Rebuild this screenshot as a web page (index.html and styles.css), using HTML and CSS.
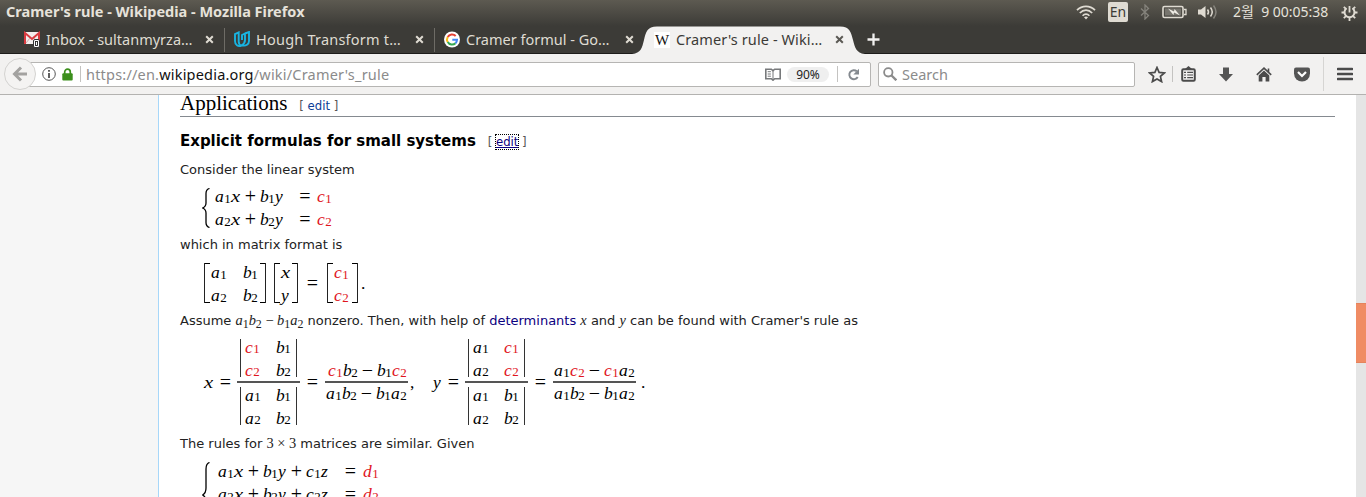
FILE: index.html
```html
<!DOCTYPE html>
<html lang="en">
<head>
<meta charset="utf-8">
<title>Cramer's rule - Wikipedia</title>
<link rel="stylesheet" href="styles.css">
</head>
<body>
<header class="titlebar">
  <span class="window-title">Cramer's rule - Wikipedia - Mozilla Firefox</span>
  <div class="tray">
    <svg class="wifi" width="20" height="16" viewBox="0 0 20 16" fill="none" stroke="#dfdbd2" stroke-width="1.7"><path d="M1 6.2C6 1 14 1 19 6.2M3.8 9C7.5 5.200 12.500 5.200 16.200 9M6.600 11.800c2-2.200 4.800-2.200 6.800 0"/><path d="M10 15.500l-2-2.200q2-1.500 4 0z" fill="#dfdbd2" stroke="none"/></svg>
    <span class="lang">En</span>
    <svg class="bt" width="10" height="16" viewBox="0 0 10 16" fill="none" stroke="#85837c" stroke-width="1.3"><path d="M1 4.500l7.500 7L5 15V1l3.500 3.500L1 11.500"/></svg>
    <svg class="bat" width="25" height="14" viewBox="0 0 25 14"><rect x="1" y="1.500" width="20" height="11" rx="1.500" fill="none" stroke="#dfdbd2" stroke-width="1.600"/><path d="M22 4.500h2v5h-2" fill="none" stroke="#dfdbd2" stroke-width="1.300"/><rect x="3" y="3.500" width="16" height="7" fill="#77756e"/><path d="M6 3.500l6 3 .5-2.500 5.500 6.500-6-3-.5 2.500z" fill="#efece5"/></svg>
    <svg class="vol" width="20" height="16" viewBox="0 0 20 16" fill="none" stroke="#dfdbd2" stroke-width="1.500"><path d="M0 5.500h3L7.500 2v12L3 10.500H0z" fill="#dfdbd2" stroke="none"/><path d="M9.500 5.500q2 2.500 0 5M12.500 3.500q3.500 4.500 0 9"/><path d="M15.500 1.500q5 6.500 0 13" stroke="#85837c"/></svg>
    <span class="clock">2월&nbsp; 9 00:05:38</span>
    <svg class="gear" width="17" height="17" viewBox="0 0 17 17" fill="none" stroke="#dfdbd2"><path d="M5.500 4.200a5 5 0 1 0 6 0" stroke-width="2"/><path d="M8.500 2v6.500M8.500 13.500V17M0.500 8.500H4M13 8.500h3.500M2.800 2.800l2.400 2.400M14.200 2.800l-2.400 2.400M2.800 14.200l2.400-2.400M14.200 14.200l-2.400-2.400" stroke-width="1.800"/></svg>
  </div>
</header>

<nav class="tabs">
  <div class="tab">
    <svg width="17" height="17" viewBox="0 0 17 17"><rect y="1" width="16" height="12" rx="1" fill="#f3eeee"/><path d="M1 13V2l7 6 7-6v11" fill="none" stroke="#d93b40" stroke-width="2"/><path d="M2 12l4-5M14 12l-4-5" stroke="#cfa9a9"/><rect x="9.500" y="8.500" width="6" height="8" rx="1.500" fill="#fff" stroke="#333"/><rect x="11.500" y="10.500" width="2" height="4" fill="#fff" stroke="#222" stroke-width=".9"/></svg>
    <span class="label t1">Inbox - sultanmyrza…</span>
    <svg class="close" width="9" height="9" viewBox="0 0 9 9"><path d="M1.200 1.200l6.600 6.600M7.800 1.200L1.200 7.800"/></svg>
  </div>
  <div class="tab">
    <svg width="17" height="17" viewBox="0 0 17 17" fill="none" stroke="#19b3e0" stroke-width="1.900"><path d="M4.700 1.400L1 3.200V10c0 4 3 6 6.500 4.600C5.500 14 4.700 12.500 4.700 10.500zM8 9V4l3-1.500V9c0 3-1.500 4.300-3.500 5.300M11 2.500L15 1v9c0 3-3 5.500-7 4.300"/></svg>
    <span class="label t2">Hough Transform t…</span>
    <svg class="close" width="9" height="9" viewBox="0 0 9 9"><path d="M1.200 1.200l6.600 6.600M7.800 1.200L1.200 7.800"/></svg>
  </div>
  <div class="tab">
    <svg width="17" height="17" viewBox="0 0 17 17" fill="none" stroke-width="2"><circle cx="8" cy="8.500" r="8" fill="#fff"/><path d="M11.700 5A5 5 0 0 0 3.700 6" stroke="#e44134"/><path d="M3.700 6a5 5 0 0 0 0 5" stroke="#f8bb15"/><path d="M3.700 11a5 5 0 0 0 7.800 1.200" stroke="#34a853"/><path d="M11.500 12.200A5 5 0 0 0 13 8.700H8.300" stroke="#4285f4"/></svg>
    <span class="label t3">Cramer formul - Go…</span>
    <svg class="close" width="9" height="9" viewBox="0 0 9 9"><path d="M1.200 1.200l6.600 6.600M7.800 1.200L1.200 7.800"/></svg>
  </div>
  <div class="tab active">
    <svg class="tab-shape" width="236" height="28" viewBox="0 0 236 28"><path d="M0 28C9 27 10 22 12 14S15 .5 25 .5H208c10 0 11 6 13 13.500S224 27 233 28z" fill="#f2f1f0"/></svg>
    <span class="wfav">W</span>
    <span class="label t4">Cramer's rule - Wiki…</span>
    <svg class="close" width="9" height="9" viewBox="0 0 9 9"><path d="M1.200 1.200l6.600 6.600M7.800 1.200L1.200 7.800"/></svg>
  </div>
  <svg class="plus" width="13" height="13" viewBox="0 0 13 13"><path d="M6.500 .5v12M.5 6.500h12" stroke="#f2f1f0" stroke-width="2.300"/></svg>
</nav>

<div class="toolbar">
  <svg class="back" width="32" height="32" viewBox="0 0 32 32"><circle cx="16" cy="16" r="15.500" fill="#f4f3f2" stroke="#d3d2d0"/><path d="M23 16H11M17 9.500L10.500 16l6.500 6.500" fill="none" stroke="#a3a2a0" stroke-width="3"/></svg>
  <div class="urlbar">
    <svg class="info" width="14" height="14" viewBox="0 0 14 14"><circle cx="7" cy="7" r="6.300" fill="none" stroke="#555"/><path d="M7 3v1.800M7 6v5" stroke="#444" stroke-width="1.700"/></svg>
    <svg class="lock" width="11" height="13" viewBox="0 0 11 13"><path d="M2.700 7V4a2.800 2.800 0 0 1 5.600 0v3" fill="none" stroke="#3c8f1c" stroke-width="1.700"/><rect x=".3" y="5.300" width="10.400" height="7.200" rx="1" fill="#3c8f1c"/></svg>
    <span class="vsep"></span>
    <span class="url">https://en.<b>wikipedia.org</b>/wiki/Cramer's_rule</span>
    <svg class="reader" width="16" height="13" viewBox="0 0 16 13" fill="none" stroke="#77797b"><path d="M.8 1.200h5.500L8 2.700l1.700-1.500h5.500v9.500H9.700L8 12.200l-1.700-1.500H.8z" stroke-width="1.600"/><path d="M8 3v8.500M2.700 3.700h3.200M2.700 6h3.200M2.700 8.200h3.200"/></svg>
    <span class="zoom">90%</span>
    <span class="vsep"></span>
    <svg class="reload" width="13" height="13" viewBox="0 0 13 13"><path d="M9.800 3.300A4.500 4.500 0 1 0 10.700 9" fill="none" stroke="#84898f" stroke-width="1.900"/><path d="M12 .8v5.700H6.300z" fill="#84898f"/></svg>
  </div>
  <div class="search">
    <svg width="14" height="14" viewBox="0 0 14 14" fill="none" stroke="#8b8b8b"><circle cx="5.300" cy="5.300" r="4.200" stroke-width="1.800"/><path d="M8.300 8.300l5 5" stroke-width="2.300"/></svg>
    <span>Search</span>
  </div>
  <div class="actions">
    <svg class="star" width="18" height="17" viewBox="0 0 18 17"><path d="M9 1.500l2.100 4.900 5.300.5-4 3.500 1.200 5.200L9 12.900l-4.600 2.700 1.200-5.200-4-3.500 5.300-.5z" fill="none" stroke="#4b4b4b" stroke-width="1.700"/></svg>
    <span class="vsep"></span>
    <svg class="clip" width="15" height="16" viewBox="0 0 15 16" fill="none" stroke="#4b4b4b"><rect x="1.200" y="3.200" width="12.600" height="11.600" rx="1.200" stroke-width="2"/><path d="M4 3l3.500-3L11 3z" fill="#4b4b4b" stroke="none"/><path d="M3 6.300h2M3 9h2M3 11.700h2M6.200 6.300H12M6.200 9H12M6.200 11.700H12" stroke-width="1.200"/></svg>
    <svg class="down" width="14" height="15" viewBox="0 0 14 15"><path d="M4 .5h6V7h4l-7 7.500L0 7h4z" fill="#555"/></svg>
    <svg class="home" width="16" height="15" viewBox="0 0 16 15"><path d="M.8 7.800L8 1.200l7.200 6.600M12.500 1.500V5" fill="none" stroke="#4b4b4b" stroke-width="1.600"/><path d="M8 3.600l5.300 4.800v6.100H9.600V10H6.400v4.500H2.700V8.400z" fill="#4b4b4b"/></svg>
    <svg class="pocket" width="16" height="15" viewBox="0 0 16 15"><path d="M2 .5h12q2 0 2 2V6.500a8 8 0 0 1-16 0V2.500q0-2 2-2z" fill="#555"/><path d="M4 5l4 4 4-4" fill="none" stroke="#fff" stroke-width="2.200"/></svg>
    <span class="vsep tall"></span>
    <svg class="menu" width="16" height="14" viewBox="0 0 16 14"><path d="M1 2h14M1 7h14M1 12h14" stroke="#4b4b4b" stroke-width="2.600" stroke-linecap="round"/></svg>
  </div>
</div>

<div class="viewport">
  <aside class="side"></aside>
  <main class="article">
    <h2><span class="h2text">Applications</span><small>[ <a>edit</a> ]</small></h2>
    <h3><span class="h3text">Explicit formulas for small systems</span><small>[ <a class="focus">edit</a> ]</small></h3>
    <p class="p1">Consider the linear system</p>

    <div class="system">
      <svg class="brace" width="8" height="40" viewBox="0 0 8 40"><path d="M7.500 .5Q4 1.500 4 5.500V15Q4 18.500.7 20Q4 21.500 4 25V34.500Q4 38.500 7.500 39.500"/></svg>
      <div class="rows">
        <div class="math"><i class="a">a</i><sub>1</sub><i class="x">x</i><s>+</s><i class="b">b</i><sub>1</sub><i class="y">y</i><s class="eq">=</s><em><i class="c">c</i><sub>1</sub></em></div>
        <div class="math"><i class="a">a</i><sub>2</sub><i class="x">x</i><s>+</s><i class="b">b</i><sub>2</sub><i class="y">y</i><s class="eq">=</s><em><i class="c">c</i><sub>2</sub></em></div>
      </div>
    </div>

    <p class="p2">which in matrix format is</p>

    <div class="matrix-eq">
      <div class="matrix two"><div class="math"><i class="a">a</i><sub>1</sub></div><div class="math"><i class="b">b</i><sub>1</sub></div><div class="math"><i class="a">a</i><sub>2</sub></div><div class="math"><i class="b">b</i><sub>2</sub></div></div>
      <div class="matrix vec"><div class="math"><i class="x">x</i></div><div class="math"><i class="y">y</i></div></div>
      <div class="math"><s class="meq">=</s></div>
      <div class="matrix rhs"><div class="math"><em><i class="c">c</i><sub>1</sub></em></div><div class="math"><em><i class="c">c</i><sub>2</sub></em></div></div>
      <div class="math dot">.</div>
    </div>

    <p class="p3">Assume <span class="tm"><i>a</i><sub>1</sub><i>b</i><sub>2</sub> − <i>b</i><sub>1</sub><i>a</i><sub>2</sub></span> nonzero. Then, with help of <a>determinants</a> <span class="tm"><i>x</i></span> and <span class="tm"><i>y</i></span> can be found with Cramer's rule as</p>

    <div class="cramer">
      <div class="math"><i class="x">x</i><s class="deq">=</s></div>
      <div class="frac">
        <div class="det top"><div class="math"><em><i class="c">c</i><sub>1</sub></em></div><div class="math"><i class="b">b</i><sub>1</sub></div><div class="math"><em><i class="c">c</i><sub>2</sub></em></div><div class="math"><i class="b">b</i><sub>2</sub></div></div>
        <div class="det"><div class="math"><i class="a">a</i><sub>1</sub></div><div class="math"><i class="b">b</i><sub>1</sub></div><div class="math"><i class="a">a</i><sub>2</sub></div><div class="math"><i class="b">b</i><sub>2</sub></div></div>
      </div>
      <div class="math"><s class="feq">=</s></div>
      <div class="frac small">
        <div class="math num"><em><i class="c">c</i><sub>1</sub></em><i class="b">b</i><sub>2</sub><s>−</s><i class="b">b</i><sub>1</sub><em><i class="c">c</i><sub>2</sub></em></div>
        <div class="math"><i class="a">a</i><sub>1</sub><i class="b">b</i><sub>2</sub><s>−</s><i class="b">b</i><sub>1</sub><i class="a">a</i><sub>2</sub></div>
      </div>
      <div class="math comma">,</div>
      <div class="math"><i class="y">y</i><s class="deq">=</s></div>
      <div class="frac">
        <div class="det top"><div class="math"><i class="a">a</i><sub>1</sub></div><div class="math"><em><i class="c">c</i><sub>1</sub></em></div><div class="math"><i class="a">a</i><sub>2</sub></div><div class="math"><em><i class="c">c</i><sub>2</sub></em></div></div>
        <div class="det"><div class="math"><i class="a">a</i><sub>1</sub></div><div class="math"><i class="b">b</i><sub>1</sub></div><div class="math"><i class="a">a</i><sub>2</sub></div><div class="math"><i class="b">b</i><sub>2</sub></div></div>
      </div>
      <div class="math"><s class="feq">=</s></div>
      <div class="frac small">
        <div class="math"><i class="a">a</i><sub>1</sub><em><i class="c">c</i><sub>2</sub></em><s>−</s><em><i class="c">c</i><sub>1</sub></em><i class="a">a</i><sub>2</sub></div>
        <div class="math"><i class="a">a</i><sub>1</sub><i class="b">b</i><sub>2</sub><s>−</s><i class="b">b</i><sub>1</sub><i class="a">a</i><sub>2</sub></div>
      </div>
      <div class="math dot">.</div>
    </div>

    <p class="p4">The rules for <span class="tm">3 × 3</span> matrices are similar. Given</p>

    <div class="system three">
      <svg class="brace" width="8" height="66" viewBox="0 0 8 66"><path d="M7.500 .5Q4 1.500 4 7V26Q4 31 .7 33Q4 35 4 40V60Q4 64.500 7.500 65.500"/></svg>
      <div class="rows">
        <div class="math"><i class="a">a</i><sub>1</sub><i class="x">x</i><s>+</s><i class="b">b</i><sub>1</sub><i class="y">y</i><s>+</s><i class="c">c</i><sub>1</sub><i class="z">z</i><s class="eq">=</s><em><i class="d">d</i><sub>1</sub></em></div>
        <div class="math"><i class="a">a</i><sub>2</sub><i class="x">x</i><s>+</s><i class="b">b</i><sub>2</sub><i class="y">y</i><s>+</s><i class="c">c</i><sub>2</sub><i class="z">z</i><s class="eq">=</s><em><i class="d">d</i><sub>2</sub></em></div>
      </div>
    </div>
  </main>
  <div class="scroll"><div class="thumb"></div></div>
</div>
</body>
</html>
```

FILE: styles.css
```css
* { box-sizing: border-box; }
body {
  margin: 0;
  width: 1366px;
  height: 497px;
  overflow: hidden;
  display: flex;
  flex-direction: column;
  background: #fff;
  font-family: "Noto Sans", "Open Sans", "Noto Sans CJK KR", sans-serif;
}
svg { display: block; flex: none; }

/* Title bar and system tray */
.titlebar {
  height: 26px;
  flex: none;
  display: flex;
  justify-content: space-between;
  align-items: center;
  padding: 0 8px 2px 6px;
  background: linear-gradient(#5d5a51, #3c3b37);
  color: #e6e2da;
}
.window-title { font-size: 14.5px; font-weight: 700; line-height: 22px; padding-bottom: 2px; white-space: nowrap; }
.tray { display: flex; align-items: center; }
.lang {
  width: 20px; height: 20px; margin: 0 12px;
  border-radius: 2px; background: #dfdbd2; color: #3c3b37;
  font-size: 14px; line-height: 20px; text-align: center;
}
.bat { margin-left: 12px; }
.vol { margin-left: 11px; }
.clock { width: 96px; margin: 0 12px 0 15px; font-size: 14px; line-height: 22px; white-space: nowrap; }

/* Tabs */
.tabs {
  height: 28px;
  flex: none;
  display: flex;
  align-items: center;
  padding-left: 15px;
  background: #3c3b37;
  border-bottom: 1px solid #1d1c1a;
}
.tab {
  position: relative;
  width: 210px; height: 24px;
  display: flex; align-items: center;
  padding: 0 10px 0 9px;
  border-right: 1px solid #6e6c66;
  color: #dfdbd2;
}
.tab:nth-child(3), .tab.active { border-right-color: transparent; }
.label { width: 150px; margin-left: 5px; font-size: 14.5px; line-height: 22px; padding-bottom: 2px; white-space: nowrap; }
.t2 { letter-spacing: .22px; }
.t4 { letter-spacing: .1px; }
.close { margin-left: auto; fill: none; stroke: #dfdbd2; stroke-width: 2; }
.active { color: #3c3b37; }
.active .close { stroke: #5b5954; }
.tab-shape { position: absolute; left: -13px; top: -2px; }
.active > :not(.tab-shape) { position: relative; }
.wfav { width: 16px; height: 16px; background: #fff; color: #111; font: 15px/16px "Liberation Serif", serif; text-align: center; }
.active .label { margin-left: 6px; width: 149px; }
.plus { margin-left: 12px; }

/* Navigation toolbar */
.toolbar {
  height: 41px;
  flex: none;
  display: flex;
  align-items: center;
  padding: 0 11px 0 4px;
  background: #f2f1f0;
  border-bottom: 1px solid #b3b2b0;
}
.back { position: relative; z-index: 1; }
.urlbar, .search {
  height: 25px;
  display: flex; align-items: center;
  background: #fff;
  border: 1px solid #b6b5b3;
  border-radius: 2px;
  font-size: 14.5px;
}
.urlbar { width: 852px; margin-left: -17px; padding: 0 10px 0 22px; }
.info { margin-right: 6px; }
.vsep { width: 1px; height: 16px; background: #c4c3c1; flex: none; }
.lock + .vsep { margin: 0 5px 0 7px; }
.url { flex: 1; color: #8b8b8b; letter-spacing: .2px; white-space: nowrap; }
.url b { font-weight: 400; color: #111; }
.zoom { width: 42px; height: 15px; margin: 0 8px 0 6px; border-radius: 8px; background: #efefef; color: #222; font-size: 12px; line-height: 15px; text-align: center; }
.reload { margin-left: 9px; }
.search { width: 257px; margin-left: 7px; padding-left: 4px; color: #8b8b8b; }
.search span { margin-left: 5px; }
.actions { display: flex; align-items: center; margin-left: 13px; }
.star { margin-right: 6px; }
.clip { margin-left: 8px; }
.down { margin-left: 23px; }
.home { margin-left: 23px; }
.pocket { margin-left: 22px; }
.tall { height: 34px; margin: 0 13px; background: #d6d5d3; }

/* Page */
.viewport { flex: 1; min-height: 0; display: flex; overflow: hidden; }
.side { width: 159px; flex: none; background: #f6f6f6; border-right: 1px solid #a7d7f9; }
.article { flex: 1; padding: 0 21px; overflow: hidden; font: 13px/20px "DejaVu Sans", sans-serif; color: #222; }
.scroll { width: 10px; flex: none; background: #e5e5e5; padding-top: 208px; }
.thumb { height: 60px; background: #f08c64; border-top: 1px solid #e5835c; border-bottom: 1px solid #e5835c; }
h2, h3, p { margin: 0; white-space: nowrap; }
h2 { height: 22px; border-bottom: 1px solid #858a90; font: 21px/17px "Liberation Serif", serif; color: #000; }
h2 small, h3 small { font: 11.7px/17px "DejaVu Sans", sans-serif; color: #555; margin-left: 12px; }
h2 small { line-height: 15px; }
a { color: #0b3c96; }
h3 { height: 43px; padding-top: 13px; font-size: 15px; line-height: 22px; letter-spacing: -.02px; color: #000; }
h3 small .focus { color: #0b0080; text-decoration: underline; outline: 1px dotted #000; }
.p1 { height: 26px; line-height: 20px; }
.p2 { height: 25px; }
.p3 a { color: #0b0080; }
.p3 { height: 26px; }
.p4 { height: 26px; }
.tm { font: 14.4px/16px "Liberation Serif", serif; }
.tm sub { font-size: 11.9px; line-height: 0; vertical-align: -3px; }

/* Formulas: every symbol sits in a fixed advance */
.math { display: flex; height: 23px; line-height: 23px; font-family: "Liberation Serif", serif; font-size: 17.5px; color: #000; }
.math i, .math s, .math sub { display: block; flex: none; text-decoration: none; }
.math em { display: flex; color: #e0141e; font-style: normal; }
.math i.a { width: 9px; }
.math i.b, .math i.c { width: 8px; }
.math i.d { width: 9px; }
.math i.x, .math i.z { width: 10px; }
.math i.x { transform: scaleX(1.18); transform-origin: 0 50%; }
.math i.y { width: 9px; }
.math sub { width: 7px; padding-left: .3px; font-size: 13px; line-height: 28px; }
.math s { width: 19px; text-align: center; font-size: 20px; line-height: 22px; }
.math s.eq { width: 33px; padding-left: 9px; }
.brace { fill: none; stroke: #000; stroke-width: 1.300; }
.system { height: 49px; padding-left: 22px; display: flex; }
.system .brace { margin-top: 2px; }
.rows { padding-left: 5px; margin-top: -1px; }
.three { height: auto; }
.three .rows { padding-left: 8px; margin-top: 0; }
.three .math s.eq { width: 32px; padding-left: 7px; margin-right: 0; }

.matrix-eq { height: 51px; padding: 2px 0 0 24px; display: flex; align-items: center; }
.matrix {
  display: grid; align-content: center;
  height: 40px; padding: 2px 6px 0; margin-top: -8px;
  background:
    linear-gradient(#000, #000) left top / 5px 1px no-repeat,
    linear-gradient(#000, #000) left bottom / 5px 1px no-repeat,
    linear-gradient(#000, #000) right top / 5px 1px no-repeat,
    linear-gradient(#000, #000) right bottom / 5px 1px no-repeat;
  border: solid #222; border-width: 0 1px;
}
.two { width: 62px; grid-template-columns: 32px 16px; }
.vec { width: 24px; margin-left: 8px; }
.rhs { width: 31px; }
.matrix-eq .meq { width: 29px; }
.matrix-eq > .math { margin-top: -6px; }
.dot { padding-left: 3px; }

.cramer { height: 97px; padding: 0 0 7px 24px; display: flex; align-items: center; }
.math s.deq { width: 23px; }
.math s.feq { width: 25px; }
.frac {
  width: 63px;
  display: grid; grid-template-rows: auto auto;
  background: linear-gradient(#555, #555) 0 50% / 100% 2px no-repeat;
}
.det {
  display: grid; grid-template-columns: 31px 16px; align-content: center;
  width: 57px; height: 38px; padding-left: 4px; margin: 5px 0 0 3px;
  border: solid #333; border-width: 0 1px;
}
.det.top { margin: 0 0 5px 3px; }
.frac:not(.small) .math { line-height: 24px; }
.small { width: 83px; }
.small .math { padding-left: 1px; }
.small .num { padding-left: 3px; }
.comma { width: 25px; padding-left: 2px; }
.cramer .dot { padding-left: 5px; }
```
